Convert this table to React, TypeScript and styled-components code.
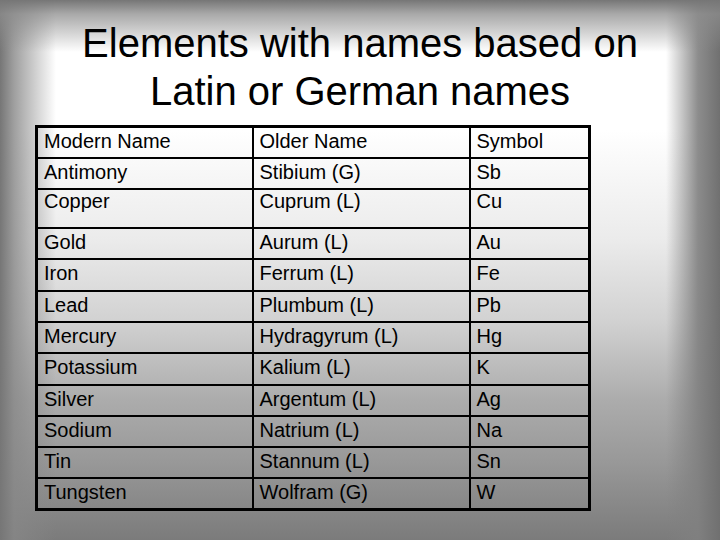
import React from "react";
import styled, { createGlobalStyle } from "styled-components";

interface Element {
  modern: string;
  older: string;
  symbol: string;
  tall?: boolean;
}

const elements: Element[] = [
  { modern: "Antimony", older: "Stibium (G)", symbol: "Sb" },
  { modern: "Copper", older: "Cuprum (L)", symbol: "Cu", tall: true },
  { modern: "Gold", older: "Aurum (L)", symbol: "Au" },
  { modern: "Iron", older: "Ferrum (L)", symbol: "Fe" },
  { modern: "Lead", older: "Plumbum (L)", symbol: "Pb" },
  { modern: "Mercury", older: "Hydragyrum (L)", symbol: "Hg" },
  { modern: "Potassium", older: "Kalium (L)", symbol: "K" },
  { modern: "Silver", older: "Argentum (L)", symbol: "Ag" },
  { modern: "Sodium", older: "Natrium (L)", symbol: "Na" },
  { modern: "Tin", older: "Stannum (L)", symbol: "Sn" },
  { modern: "Tungsten", older: "Wolfram (G)", symbol: "W" },
];

export default function App() {
  return (
    <>
      <GlobalStyle />
      <Slide>
        <Title>
          Elements with names based on
          <br />
          Latin or German names
        </Title>
        <Table>
          <colgroup>
            <col style={{ width: 216 }} />
            <col style={{ width: 217 }} />
            <col style={{ width: 120 }} />
          </colgroup>
          <tbody>
            <Row>
              <Cell>Modern Name</Cell>
              <Cell>Older Name</Cell>
              <Cell>Symbol</Cell>
            </Row>
            {elements.map((el) => (
              <Row key={el.modern} $tall={el.tall}>
                <Cell $tall={el.tall}>{el.modern}</Cell>
                <Cell $tall={el.tall}>{el.older}</Cell>
                <Cell $tall={el.tall}>{el.symbol}</Cell>
              </Row>
            ))}
          </tbody>
        </Table>
      </Slide>
    </>
  );
}

const GlobalStyle = createGlobalStyle`
  html, body {
    margin: 0;
    padding: 0;
    width: 720px;
    height: 540px;
    overflow: hidden;
  }
`;

const Slide = styled.div`
  width: 720px;
  height: 540px;
  box-sizing: border-box;
  padding-top: 19px;
  display: flex;
  flex-direction: column;
  font-family: "Liberation Sans", Arial, sans-serif;
  color: #000;
  background:
    linear-gradient(to bottom, rgba(118, 118, 118, 1) 0px, rgba(140, 140, 140, 0.75) 14px, rgba(200, 200, 200, 0) 52px),
    linear-gradient(to right, rgba(118, 118, 118, 1) 0px, rgba(135, 135, 135, 0.8) 14px, rgba(200, 200, 200, 0) 56px),
    linear-gradient(to left, rgba(112, 112, 112, 1) 0px, rgba(128, 128, 128, 0.9) 22px, rgba(160, 160, 160, 0) 54px),
    linear-gradient(
      to bottom,
      #ffffff 0px,
      #ffffff 130px,
      #ebebeb 240px,
      #d2d2d2 320px,
      #acacac 400px,
      #999999 460px,
      #7b7b7b 540px
    );
`;

const Title = styled.h1`
  margin: 0;
  font-size: 40px;
  line-height: 48px;
  font-weight: normal;
  text-align: center;
`;

const Table = styled.table`
  margin: 10px 0 0 35px;
  width: 553px;
  table-layout: fixed;
  border-collapse: collapse;
  border: 3px solid #000;
`;

const Row = styled.tr<{ $tall?: boolean }>`
  height: ${(p) => (p.$tall ? "39px" : "31.3px")};
`;

const Cell = styled.td<{ $tall?: boolean }>`
  border: 2px solid #000;
  padding: ${(p) => (p.$tall ? "0" : "2px")} 6px 0;
  vertical-align: top;
  font-size: 20px;
  line-height: 23px;
  white-space: nowrap;
`;
